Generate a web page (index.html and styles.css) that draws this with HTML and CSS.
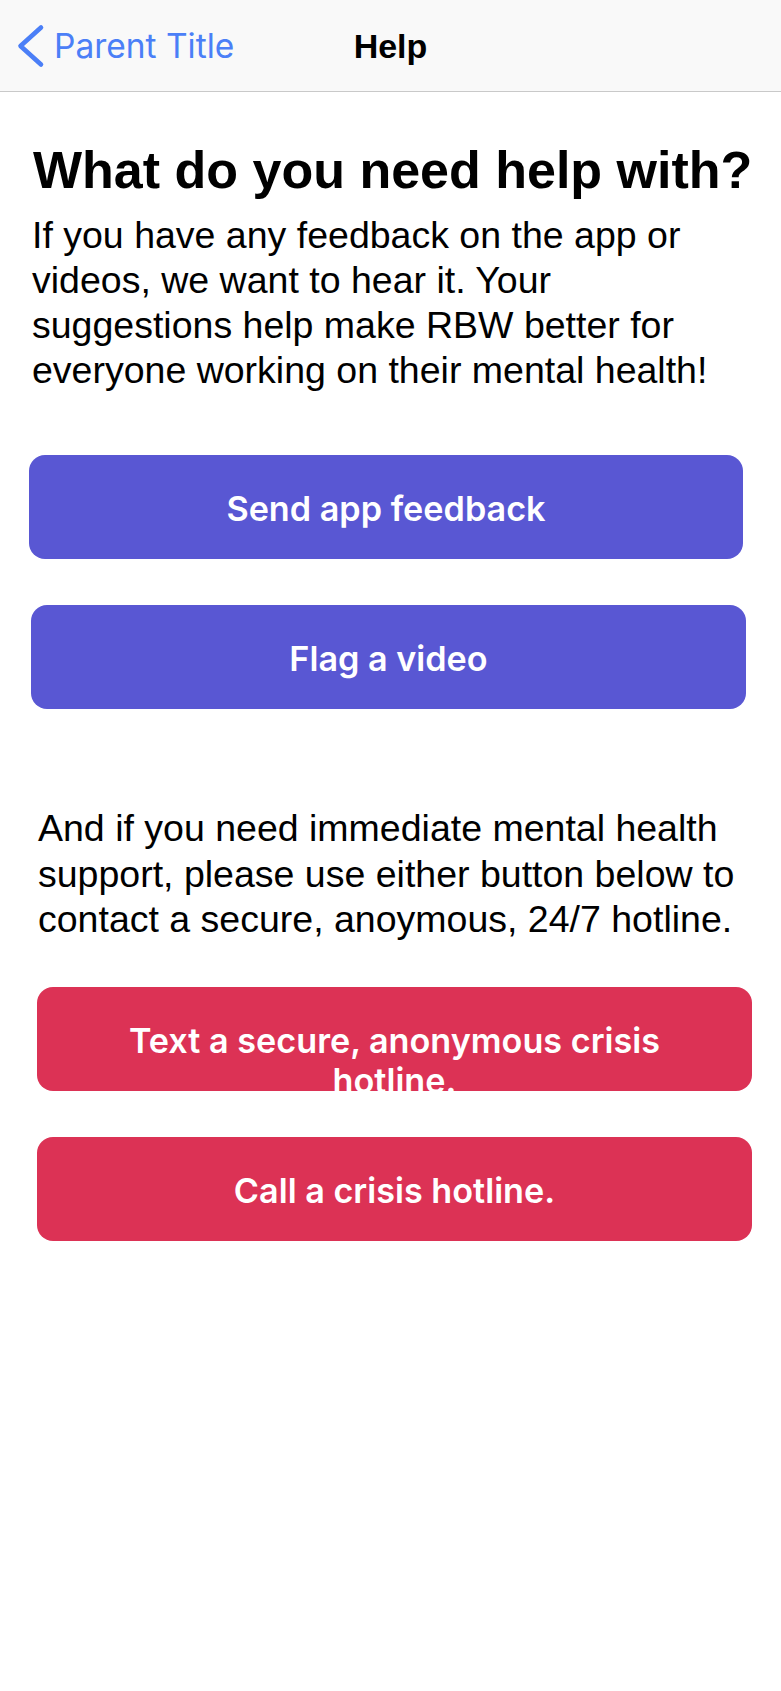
FILE: index.html
```html
<!DOCTYPE html>
<html lang="en">
<head>
<meta charset="utf-8">
<title>Help</title>
<link rel="stylesheet" href="styles.css">
</head>
<body>
<header class="navbar">
  <a class="back" href="#">
    <svg class="chevron" width="34" height="48" viewBox="0 0 34 48" aria-hidden="true">
      <path d="M29 4.5 L8.5 23 L29 41.5" fill="none" stroke="#4b7ff7" stroke-width="4.6" stroke-linecap="round" stroke-linejoin="round"/>
    </svg>
    <span class="back-label">Parent Title</span>
  </a>
  <h1 class="nav-title">Help</h1>
  <div class="nav-spacer"></div>
</header>
<main class="content">
  <h2 class="heading">What do you need help with?</h2>
  <p class="intro">If you have any feedback on the app or videos, we want to hear it. Your suggestions help make RBW better for everyone working on their mental health!</p>
  <div class="btn btn-indigo btn-feedback">Send app feedback</div>
  <div class="btn btn-indigo btn-flag">Flag a video</div>
  <p class="crisis">And if you need immediate mental health support, please use either button below to contact a secure, anoymous, 24/7 hotline.</p>
  <div class="btn btn-red btn-text">Text a secure, anonymous crisis hotline.</div>
  <div class="btn btn-red btn-call">Call a crisis hotline.</div>
</main>
</body>
</html>
```

FILE: styles.css
```css
html, body {
  margin: 0;
  padding: 0;
  background: #ffffff;
}

body {
  width: 781px;
  min-height: 1691px;
  font-family: "Liberation Sans", Arial, sans-serif;
  color: #000000;
}

.navbar {
  box-sizing: border-box;
  height: 92px;
  background: #f9f9f9;
  border-bottom: 1px solid #c9c9c9;
  display: grid;
  grid-template-columns: 1fr auto 1fr;
  align-items: center;
}

.back {
  display: flex;
  align-items: center;
  text-decoration: none;
  padding-left: 12px;
}

.chevron {
  display: block;
  margin-top: 3px;
}

.back-label {
  margin-left: 8px;
  font-family: "Inter", "Roboto", sans-serif;
  font-weight: 400;
  font-size: 33.5px;
  line-height: 40px;
  color: #4b7ff7;
  white-space: nowrap;
}

.nav-title {
  margin: 0;
  font-size: 34px;
  line-height: 40px;
  font-weight: 700;
  text-align: center;
}

.content {
  display: flex;
  flex-direction: column;
  align-items: flex-start;
}

.heading {
  margin: 48px 0 0 33px;
  font-size: 52px;
  line-height: 60px;
  font-weight: 700;
  white-space: nowrap;
}

.intro {
  margin: 13px 30px 0 32px;
  font-size: 37.5px;
  line-height: 45px;
}

.crisis {
  margin: 97px 30px 0 38px;
  font-size: 37.5px;
  line-height: 45.5px;
}

.btn {
  box-sizing: border-box;
  height: 104px;
  border-radius: 16px;
  padding: 34px 40px 0;
  overflow: hidden;
  color: #ffffff;
  font-family: "Inter", "Roboto", sans-serif;
  font-weight: 600;
  font-size: 34.2px;
  line-height: 40px;
  text-align: center;
}

.btn-indigo {
  background: #5957d3;
}

.btn-red {
  background: #dc3255;
}

.btn-feedback {
  margin: 62px 0 0 29px;
  width: 714px;
}

.btn-flag {
  margin: 46px 0 0 31px;
  width: 715px;
}

.btn-text {
  margin: 44.5px 0 0 37px;
  width: 715px;
}

.btn-call {
  margin: 46px 0 0 37px;
  width: 715px;
}
```
